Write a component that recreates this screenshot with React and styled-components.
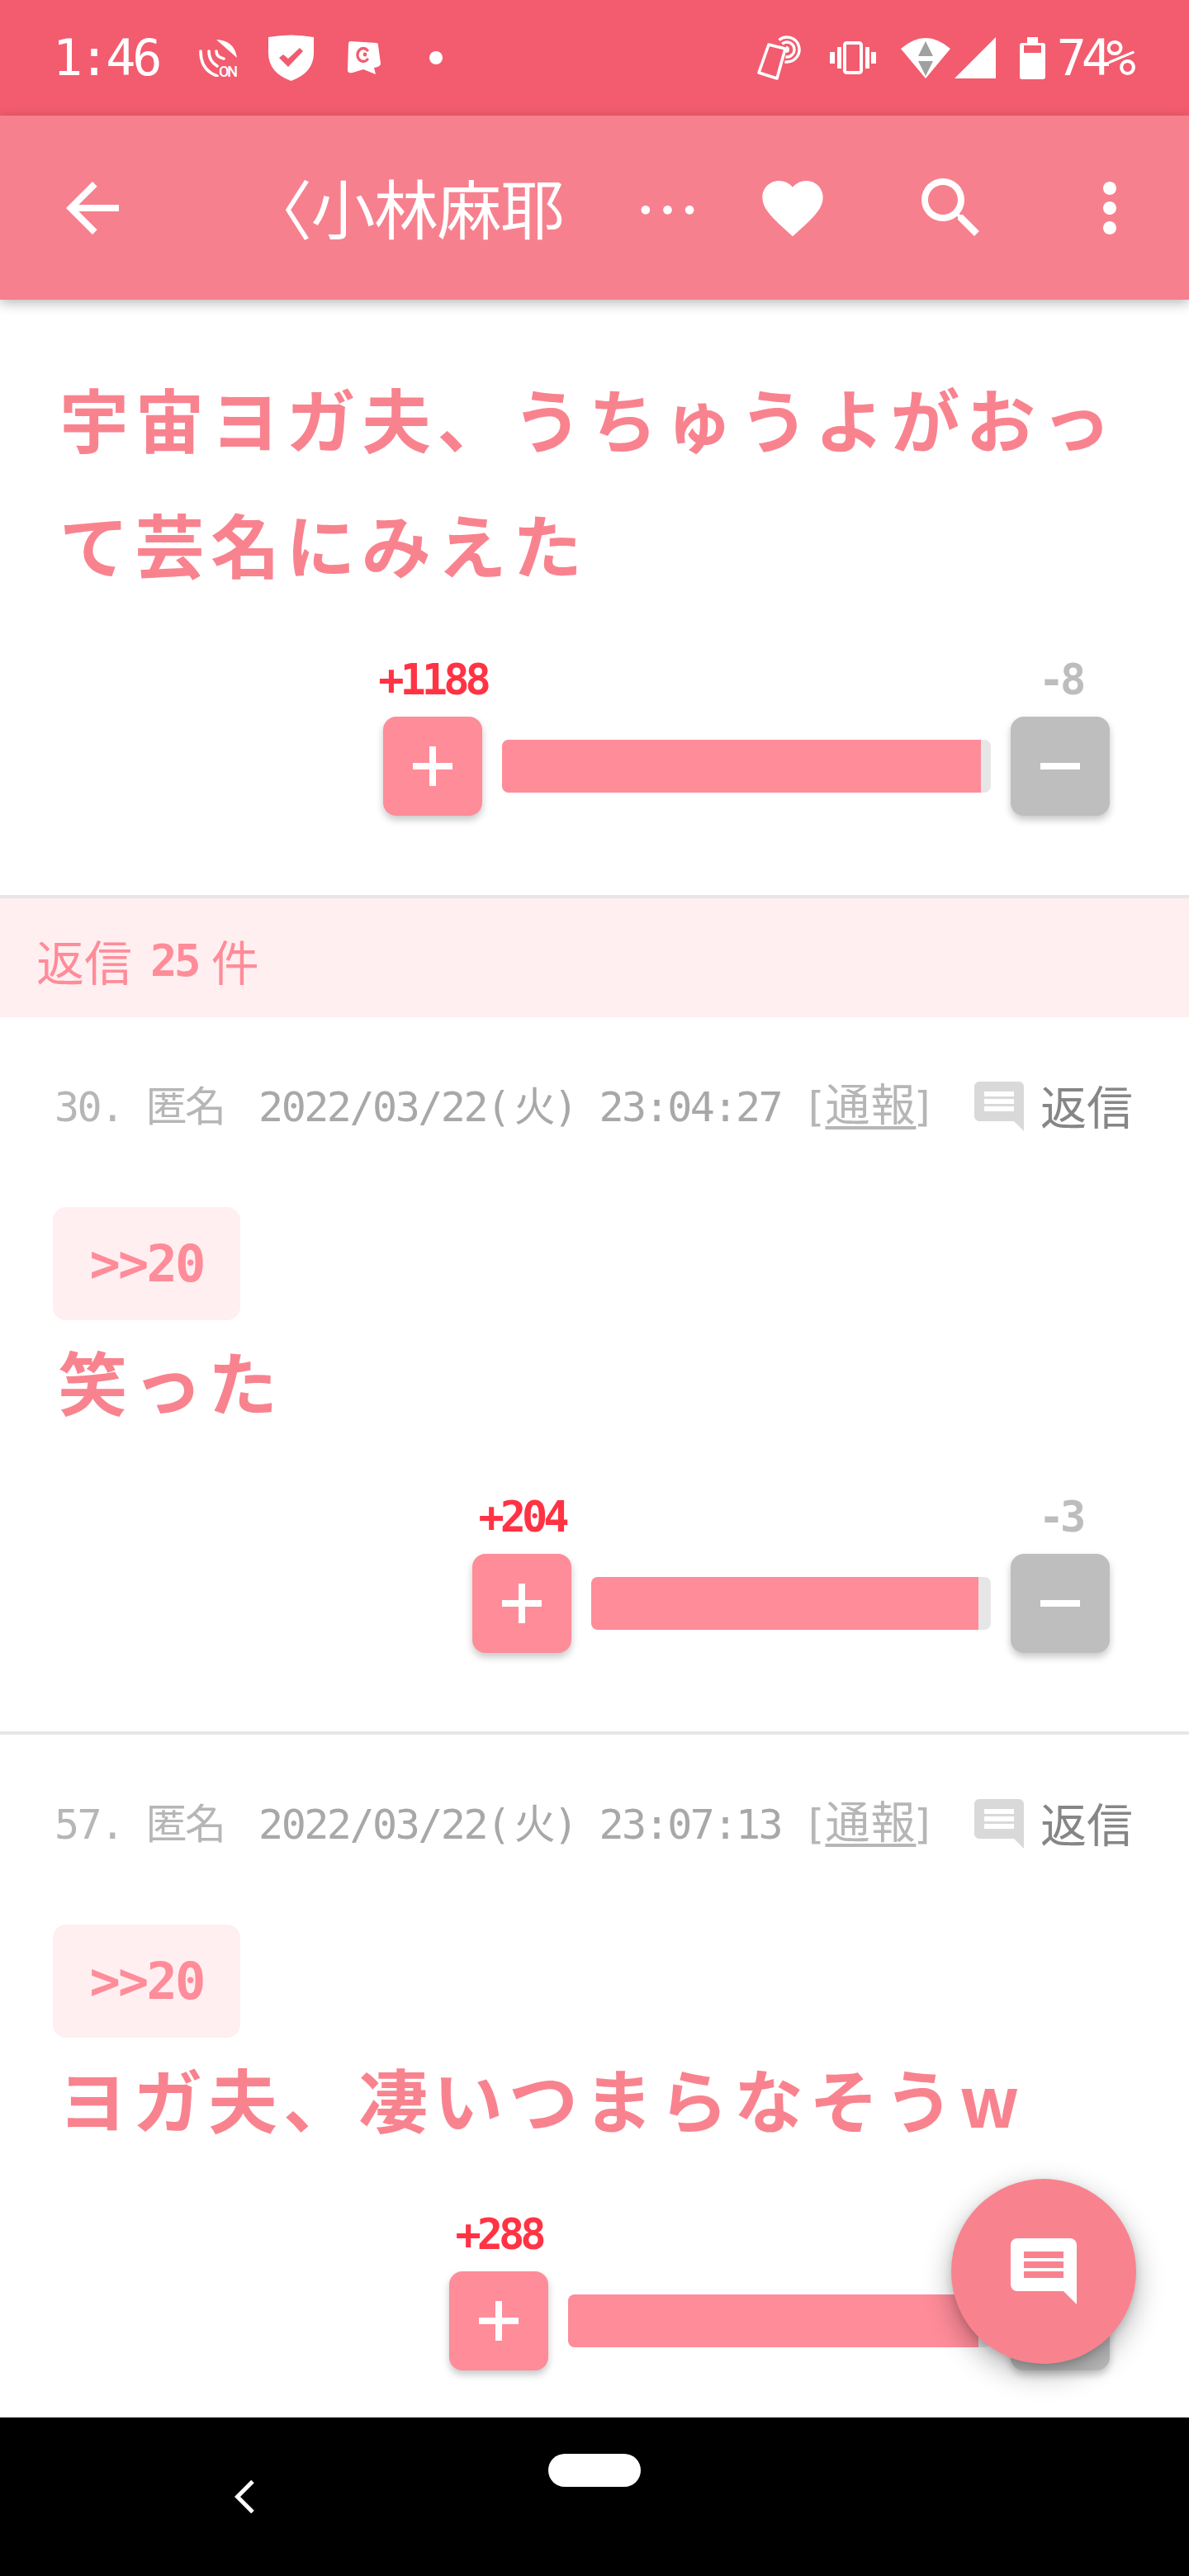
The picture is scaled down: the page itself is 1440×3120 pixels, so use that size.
import { MdArrowBack, MdFavorite, MdMoreVert, MdSearch } from 'react-icons/md';
import styled, { createGlobalStyle } from 'styled-components';

const SANS = `"Noto Sans CJK JP", sans-serif`;
const MONO = `"DejaVu Sans Mono", "Noto Sans CJK JP", monospace`;

const GlobalStyle = createGlobalStyle`
html, body {
  margin: 0;
  padding: 0;
  background: #fff;
}
`;

const Page = styled.div`
position: relative;
width: 1440px;
height: 3120px;
display: flex;
flex-direction: column;
overflow: hidden;
background: #fff;
font-family: ${SANS};
`;

const StatusBar = styled.div`
flex: 0 0 140px;
display: flex;
align-items: center;
justify-content: space-between;
padding: 0 70px 0 64px;
background: #f25c6e;
color: #fff;
`;

const StatusGroup = styled.div`
display: flex;
align-items: center;
`;

const Clock = styled.div`
width: 176px;
font-family: ${MONO};
font-size: 60px;
line-height: 70px;
letter-spacing: -4px;
`;

const Percent = styled.div`
margin-left: 14px;
font-family: ${MONO};
font-size: 60px;
line-height: 70px;
letter-spacing: -6px;
`;

const StatusIcon = styled.svg`
display: block;
flex: none;
margin-left: ${props => props.$left || 0}px;
fill: #fff;
`;

const StatusDot = styled.div`
width: 16px;
height: 16px;
margin-left: 59px;
border-radius: 50%;
background: #fff;
`;

const Toolbar = styled.div`
position: relative;
z-index: 2;
flex: 0 0 223px;
display: flex;
align-items: center;
padding: 0 48px 0 64px;
background: #f7808e;
color: #fff;
box-shadow: 0 4px 14px rgba(0, 0, 0, 0.28);
`;

const ToolButton = styled.div`
flex: 0 0 96px;
height: 96px;
display: flex;
align-items: center;
justify-content: center;
`;

const ToolActions = styled.div`
margin-left: auto;
display: flex;
gap: 96px;
`;

const Title = styled.div`
margin: -4px 0 0 140px;
font-size: 78px;
line-height: 96px;
letter-spacing: -1.5px;
white-space: nowrap;
`;

const TitleMore = styled.span`
margin-left: 86px;
font-size: 80px;
letter-spacing: 0;
`;

const Main = styled.div`
flex: 1;
min-height: 0;
overflow: hidden;
`;

const Thread = styled.section`
padding: 67px 72px 96px;
border-bottom: 4px solid #e6e6e6;
`;

const Post = styled.article`
padding: 76px 0 95px;
border-bottom: 4px solid #e6e6e6;
`;

const Message = styled.div`
font-size: 84px;
line-height: 152px;
font-weight: 700;
letter-spacing: 7.5px;
color: #f8838f;
`;

const PostMessage = styled(Message)`
margin: -3px 72px 0 70px;
letter-spacing: 7px;
`;

const RepliesHeader = styled.div`
height: 138px;
display: flex;
align-items: center;
padding: 6px 0 0 44px;
background: #ffeff1;
font-size: 58px;
color: #ff8c99;
`;

const RepliesCount = styled.span`
margin: 0 16px 0 22px;
font-family: ${MONO};
font-size: 54px;
font-weight: 700;
letter-spacing: -3.6px;
`;

const Meta = styled.div`
height: 64px;
display: flex;
align-items: center;
justify-content: space-between;
padding: 0 68px 0 66px;
margin-bottom: 90px;
`;

const MetaText = styled.div`
font-family: ${MONO};
font-size: 50px;
line-height: 64px;
letter-spacing: -2.5px;
color: #a8a8a8;
white-space: pre;
`;

const MetaName = styled.span`
margin-right: 14px;
color: #b6b6b6;
`;

const MetaLight = styled.span`
margin-left: -2px;
color: #b6b6b6;
`;

const Weekday = styled.span`
margin-left: 6px;
`;

const Report = styled.span`
margin-right: -6px;
font-size: 54px;
letter-spacing: 1px;
text-decoration: underline;
text-decoration-thickness: 4px;
text-underline-offset: 6px;
`;

const Reply = styled.div`
display: flex;
align-items: center;
gap: 20px;
margin-top: -4px;
font-size: 56px;
line-height: 64px;
color: #868686;
`;

const ReplyIcon = styled.svg`
display: block;
width: 60px;
height: 60px;
margin-top: 4px;
fill: #d9d9d9;
`;

const Quote = styled.div`
width: 227px;
height: 137px;
margin-left: 64px;
display: flex;
align-items: center;
justify-content: center;
border-radius: 16px;
background: #ffeff1;
font-family: ${MONO};
font-size: 62px;
font-weight: 700;
letter-spacing: -2.8px;
color: #ff8c99;
`;

const VoteRow = styled.div`
display: flex;
align-items: flex-end;
justify-content: flex-end;
gap: 24px;
margin-top: 59px;
padding-right: 96px;
`;

const ThreadVotes = styled(VoteRow)`
margin-right: -72px;
`;

const VoteColumn = styled.div`
width: 120px;
display: flex;
flex-direction: column;
align-items: center;
`;

const VoteCount = styled.div`
height: 60px;
margin-bottom: 15px;
font-family: ${MONO};
font-size: 52px;
line-height: 60px;
font-weight: 700;
letter-spacing: -5px;
white-space: nowrap;
color: ${props => props.$color};
`;

const VoteButton = styled.div`
width: 120px;
height: 120px;
display: flex;
align-items: center;
justify-content: center;
border-radius: 16px;
background: ${props => props.$color};
box-shadow: 0 5px 10px rgba(0, 0, 0, 0.22);
`;

const VoteGlyph = styled.svg`
display: block;
width: 48px;
height: 48px;
fill: #fff;
`;

const Track = styled.div`
width: ${props => props.$width}px;
height: 64px;
margin-bottom: 28px;
border-radius: 8px;
overflow: hidden;
background: #e6e6e6;
`;

const Fill = styled.div`
width: ${props => props.$width}px;
height: 100%;
background: #ff8c99;
`;

const Fab = styled.div`
position: absolute;
right: 64px;
bottom: 257px;
width: 224px;
height: 224px;
display: flex;
align-items: center;
justify-content: center;
border-radius: 50%;
background: #f8838f;
box-shadow: 0 12px 34px rgba(0, 0, 0, 0.3), 0 4px 10px rgba(0, 0, 0, 0.12);
`;

const FabIcon = styled.svg`
display: block;
width: 80px;
height: 80px;
fill: #fff;
`;

const NavBar = styled.div`
flex: 0 0 192px;
display: flex;
align-items: flex-start;
padding-left: 284px;
background: #000;
`;

const NavBack = styled.svg`
display: block;
width: 24px;
height: 40px;
margin-top: 76px;
fill: none;
stroke: #fff;
stroke-width: 5;
`;

const NavHome = styled.div`
width: 112px;
height: 40px;
margin: 44px 0 0 356px;
border-radius: 20px;
background: #fff;
`;

const CHAT_PATH = 'M2 0h16a2 2 0 0 1 2 2v18l-4-4H2a2 2 0 0 1-2-2V2a2 2 0 0 1 2-2zM4 4v2h12V4zM4 7v2h12V7zM4 10v2h12v-2z';

const NfcIcon = () => (
    <StatusIcon width="48" height="46" viewBox="0 0 48 46">
        <path d="M22 1Q44 2 47 23Z" />
        <g fill="none" stroke="#fff" strokeWidth="3.6" strokeLinecap="round">
            <path d="M3 15Q3 38 23 45" />
            <path d="M13 15Q13 27 23 33" />
            <path d="M22 15Q22 22 31 24" />
        </g>
        <text x="25" y="46" fontFamily="Roboto, sans-serif" fontSize="18" fontWeight="500" textLength="23" fill="#fff">ON</text>
    </StatusIcon>
);

const ShieldIcon = () => (
    <StatusIcon $left={37} width="55" height="56" viewBox="0 0 55 56">
        <path d="M0 3Q28-2 55 3V22Q55 46 27.5 56 0 46 0 22Z" />
        <path d="M13 28l11 11 18-19-4-4-14 13-6-5z" fill="#f25c6e" />
    </StatusIcon>
);

const BubbleIcon = () => (
    <StatusIcon $left={41} width="40" height="40" viewBox="0 0 40 40">
        <path d="M4 0L35 2Q37 2 37 5L40 27Q40 31 32 32L34 40 19 34 6 38Q0 39 0 35L1 3Q1 0 4 0Z" />
        <path d="M24 11A7 8 0 1 0 24 22" fill="none" stroke="#f25c6e" strokeWidth="3.4" strokeLinecap="round" />
        <circle cx="21" cy="16" r="2.4" fill="#f25c6e" />
    </StatusIcon>
);

const TiltIcon = () => (
    <StatusIcon width="56" height="54" viewBox="0 0 56 54">
        <g fill="none" stroke="#fff" strokeWidth="3.4">
            <path d="M26.4 5.5A15 15 0 1 1 33.4 31.8" />
            <path d="M30.2 10.1A9 9 0 1 1 34.4 25.9" />
        </g>
        <path d="M35 13A4 4 0 0 1 35 21Z" />
        <path d="M14 11L34 16 24 52 2 45Z" fill="#f25c6e" stroke="#fff" strokeWidth="3.6" strokeLinejoin="round" />
    </StatusIcon>
);

const VibrateIcon = () => (
    <StatusIcon $left={32} width="56" height="40" viewBox="0 0 56 40">
        <path d="M0 13h6v14H0zM9 7h5v26H9zM43 7h5v26h-5zM50 13h6v14h-6z" />
        <rect x="18" y="2" width="20" height="36" rx="2.5" fill="none" stroke="#fff" strokeWidth="4" />
    </StatusIcon>
);

const WifiIcon = () => (
    <StatusIcon $left={30} width="60" height="49" viewBox="0 0 60 49">
        <path d="M0 13Q30-13 60 13L30 49Z" />
        <path d="M30 4l9 18H21zM21 28h18l-9 18z" fill="#a0a0a0" />
    </StatusIcon>
);

const SignalIcon = () => (
    <StatusIcon $left={5} width="50" height="50" viewBox="0 0 50 50">
        <path d="M50 0V50H0Z" />
    </StatusIcon>
);

const BatteryIcon = () => (
    <StatusIcon $left={29} width="31" height="51" viewBox="0 0 31 51">
        <path d="M9 0h13v7h6a3 3 0 0 1 3 3v38a3 3 0 0 1-3 3H3a3 3 0 0 1-3-3V10a3 3 0 0 1 3-3h6z" />
        <rect x="5" y="10" width="21" height="9" fill="#f25c6e" />
    </StatusIcon>
);

const Votes = ({ Row = VoteRow, plus, minus, track, fill }) => (
    <Row>
        <VoteColumn>
            <VoteCount $color="#ff3344">{plus}</VoteCount>
            <VoteButton $color="#ff8c99">
                <VoteGlyph viewBox="0 0 48 48"><path d="M20 0h8v20h20v8H28v20h-8V28H0v-8h20z" /></VoteGlyph>
            </VoteButton>
        </VoteColumn>
        <Track $width={track}>
            <Fill $width={fill} />
        </Track>
        <VoteColumn>
            <VoteCount $color="#bdbdbd">{minus}</VoteCount>
            <VoteButton $color="#bebebe">
                <VoteGlyph viewBox="0 0 48 48"><path d="M0 20h48v8H0z" /></VoteGlyph>
            </VoteButton>
        </VoteColumn>
    </Row>
);

const Comment = ({ no, time, text, votes }) => (
    <Post>
        <Meta>
            <MetaText>
                <MetaName>{no}. 匿名</MetaName> 2022/03/22(<Weekday>火</Weekday>) {time} <MetaLight>[<Report>通報</Report>]</MetaLight>
            </MetaText>
            <Reply>
                <ReplyIcon viewBox="0 0 20 20"><path fillRule="evenodd" d={CHAT_PATH} /></ReplyIcon>
                返信
            </Reply>
        </Meta>
        <Quote>{'>>20'}</Quote>
        <PostMessage>{text}</PostMessage>
        <Votes {...votes} />
    </Post>
);

const App = () => {
    return (
        <Page lang="ja">
            <GlobalStyle />
            <StatusBar>
                <StatusGroup>
                    <Clock>1:46</Clock>
                    <NfcIcon />
                    <ShieldIcon />
                    <BubbleIcon />
                    <StatusDot />
                </StatusGroup>
                <StatusGroup>
                    <TiltIcon />
                    <VibrateIcon />
                    <WifiIcon />
                    <SignalIcon />
                    <BatteryIcon />
                    <Percent>74%</Percent>
                </StatusGroup>
            </StatusBar>
            <Toolbar>
                <ToolButton><MdArrowBack size={96} /></ToolButton>
                <Title>〈小林麻耶<TitleMore>…</TitleMore></Title>
                <ToolActions>
                    <ToolButton><MdFavorite size={88} /></ToolButton>
                    <ToolButton><MdSearch size={96} /></ToolButton>
                    <ToolButton><MdMoreVert size={96} /></ToolButton>
                </ToolActions>
            </Toolbar>
            <Main>
                <Thread>
                    <Message>宇宙ヨガ夫、うちゅうよがおって芸名にみえた</Message>
                    <Votes Row={ThreadVotes} plus="+1188" minus="-8" track={592} fill={580} />
                </Thread>
                <RepliesHeader>返信<RepliesCount>25</RepliesCount>件</RepliesHeader>
                <Comment
                    no="30"
                    time="23:04:27"
                    text="笑った"
                    votes={{ plus: '+204', minus: '-3', track: 484, fill: 469 }}
                />
                <Comment
                    no="57"
                    time="23:07:13"
                    text="ヨガ夫、凄いつまらなそうw"
                    votes={{ plus: '+288', minus: '', track: 512, fill: 497 }}
                />
            </Main>
            <Fab>
                <FabIcon viewBox="0 0 20 20"><path fillRule="evenodd" d={CHAT_PATH} /></FabIcon>
            </Fab>
            <NavBar>
                <NavBack viewBox="0 0 24 40"><path d="M22 1.5L3.5 20 22 38.5" /></NavBack>
                <NavHome />
            </NavBar>
        </Page>
    );
};

export default App;
